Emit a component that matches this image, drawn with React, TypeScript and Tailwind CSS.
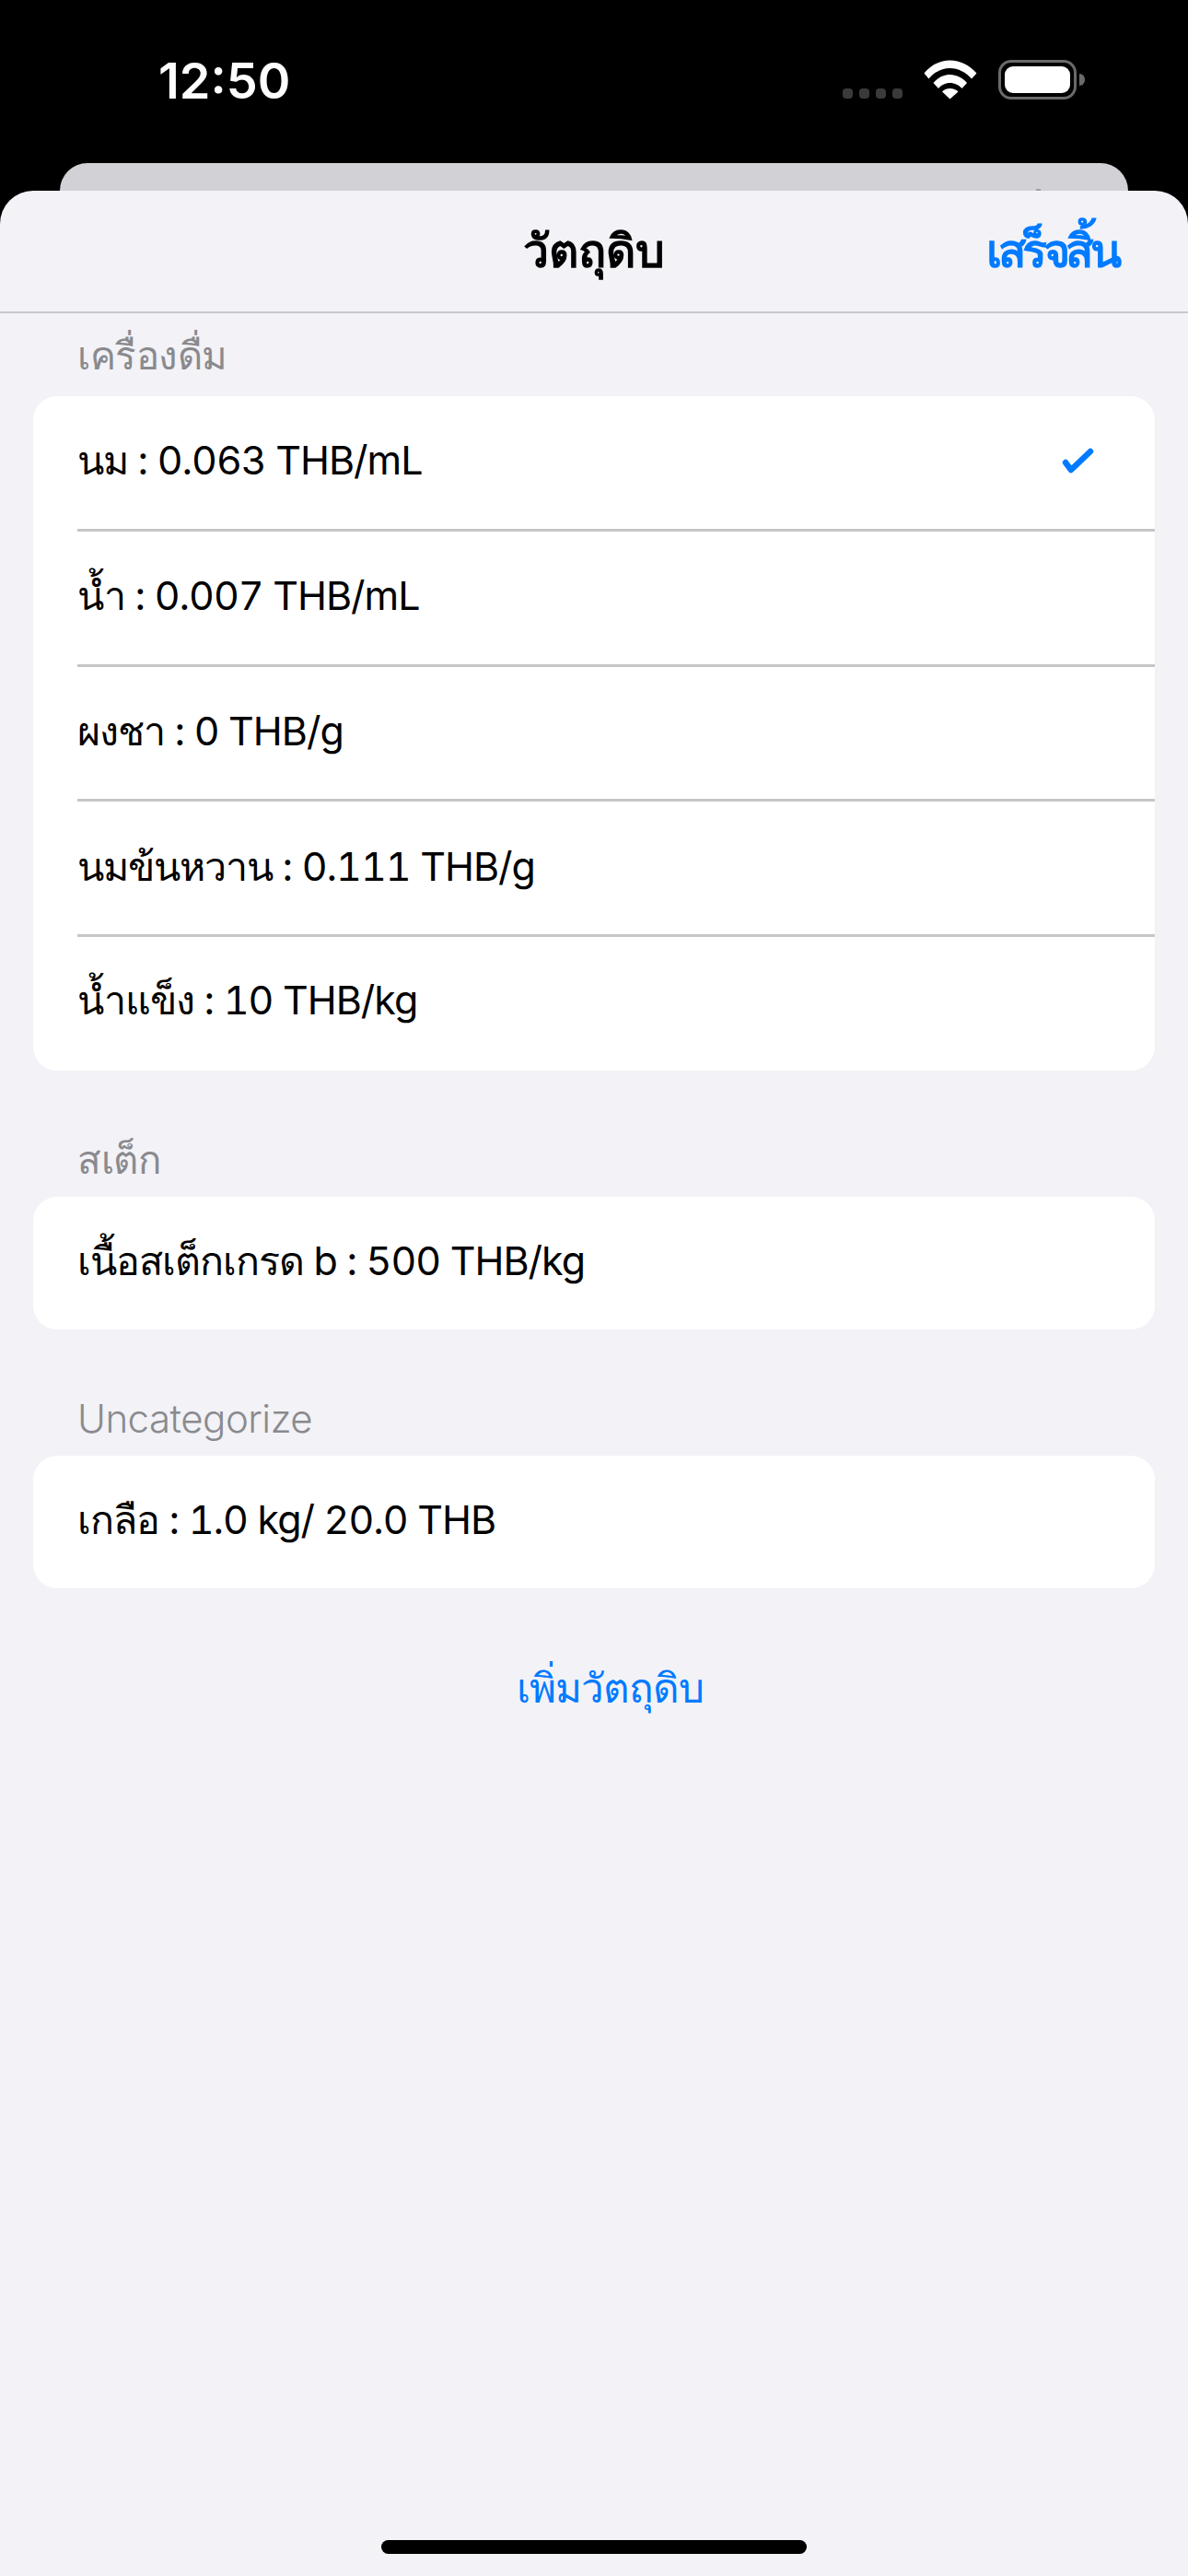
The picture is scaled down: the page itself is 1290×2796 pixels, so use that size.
const font = "font-['Inter','Noto_Sans','DejaVu_Sans',sans-serif]";

interface Section {
  title: string;
  items: string[];
}

const sections: Section[] = [
  {
    title: "เครื่องดื่ม",
    items: [
      "นม : 0.063 THB/mL",
      "น้ำ : 0.007 THB/mL",
      "ผงชา : 0 THB/g",
      "นมข้นหวาน : 0.111 THB/g",
      "น้ำแข็ง : 10 THB/kg",
    ],
  },
  { title: "สเต็ก", items: ["เนื้อสเต็กเกรด b : 500 THB/kg"] },
  { title: "Uncategorize", items: ["เกลือ : 1.0 kg/ 20.0 THB"] },
];

function StatusBar() {
  return (
    <div className="flex h-[177px] items-start justify-between bg-black pl-[172px] pr-[112px] pt-[56px]">
      <span className="text-[54px] font-semibold leading-[64px] text-white">12:50</span>
      <div className="mt-[9px] flex items-end">
        <div className="mb-px flex gap-[7px]">
          <div className="h-[11px] w-[11px] rounded-[4px] bg-[#3a3a3c]" />
          <div className="h-[11px] w-[11px] rounded-[4px] bg-[#3a3a3c]" />
          <div className="h-[11px] w-[11px] rounded-[4px] bg-[#3a3a3c]" />
          <div className="h-[11px] w-[11px] rounded-[4px] bg-[#3a3a3c]" />
        </div>
        <svg className="ml-[23px]" width="58" height="43" viewBox="0 0 58 43">
          <path fill="#fff" d="M0.5 14.5C7.5 6 17.5 0.5 28.5 0.5S50 6 57.5 14.5L52 20.5C46 13.5 37.5 9 28.5 9S11 13.5 5.5 20.5Z" />
          <path fill="#fff" d="M10.5 25C15 19.5 21.5 16 28.5 16S42.5 19.5 47 25L41.5 31C38.5 27.5 33.5 25 28.5 25S19 27.5 16 31Z" />
          <path fill="#fff" d="M20 34.5C22 32.5 25 31 28.5 31S35.5 32.5 37.5 34.5L28.5 42.5Z" />
        </svg>
        <div className="ml-[23px] flex items-center">
          <div className="h-[43px] w-[85px] rounded-[14px] border-[3px] border-[#6a6a6c] p-[4px]">
            <div className="h-full w-full rounded-[9px] bg-white" />
          </div>
          <div className="ml-[3px] h-[13px] w-[6px] rounded-r-full bg-[#6a6a6c]" />
        </div>
      </div>
    </div>
  );
}

export default function App() {
  return (
    <div className={`${font} relative h-[2796px] w-[1290px] overflow-hidden bg-black`}>
      <StatusBar />
      <div className="mx-[65px] flex h-[60px] justify-end rounded-t-[30px] bg-[#d1d1d6] pr-[95px] pt-[28px]">
        <div className="h-[3px] w-[5px] bg-[#a0a0a4]" />
      </div>
      <div className="absolute inset-x-0 bottom-0 top-[207px] rounded-t-[36px] bg-[#f2f2f7]">
        <div className="relative flex h-[133px] items-center justify-center border-b-[2px] border-[#c9c9cc]">
          <span className="text-[50px] font-semibold text-black">วัตถุดิบ</span>
          <span className="absolute right-[77px] text-[50px] font-semibold tracking-[-4.5px] text-[#007aff]">เสร็จสิ้น</span>
        </div>
        <div className="flex flex-col px-[36px]">
          {sections.map((section, i) => (
            <div key={section.title} className={i === 0 ? "" : "mt-[47px]"}>
              <div className={`flex h-[90px] items-end pl-[48px] text-[42px] font-light leading-[60px] tracking-[-0.5px] text-[#8a8a8e] ${i === 0 ? "pb-[14px]" : "pb-[10px]"}`}>
                {section.title}
              </div>
              <div className="overflow-hidden rounded-[26px] bg-white">
                {section.items.map((item, j) => (
                  <div
                    key={item}
                    className={`relative flex items-center justify-between pl-[48px] text-[43px] tracking-[-1px] text-black tabular-nums ${section.items.length === 1 ? "h-[144px] pb-[5px]" : j === section.items.length - 1 ? "h-[145px] pb-[8px]" : "h-[146.8px] pb-[8px]"}`}
                  >
                    {item}
                    {j < section.items.length - 1 && (
                      <div className="absolute bottom-0 left-[48px] right-0 h-[3px] bg-[#c6c6c8]" />
                    )}
                    {i === 0 && j === 0 && (
                      <svg className="mr-[64px]" width="40" height="40" viewBox="0 0 40 40">
                        <path d="M7 23L13 31L34 11" fill="none" stroke="#007aff" strokeWidth="6.5" strokeLinecap="round" strokeLinejoin="round" />
                      </svg>
                    )}
                  </div>
                ))}
              </div>
            </div>
          ))}
          <div className="mt-[75px] flex justify-center pl-[34px] text-[44px] font-light tracking-[-1px] text-[#007aff]">เพิ่มวัตถุดิบ</div>
        </div>
        <div className="absolute bottom-[24px] left-[414px] h-[15px] w-[462px] rounded-full bg-black" />
      </div>
    </div>
  );
}
